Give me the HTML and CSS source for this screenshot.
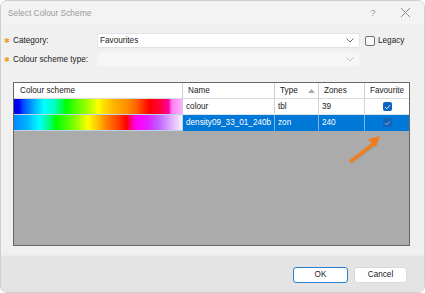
FILE: index.html
```html
<!DOCTYPE html>
<html>
<head>
<meta charset="utf-8">
<link rel="stylesheet" href="styles.css">
</head>
<body>
<div class="window">
  <div class="titlebar">
    <span class="title">Select Colour Scheme</span>
    <span class="tb-btn help">?</span>
    <span class="tb-btn close">
      <svg width="11" height="11" viewBox="0 0 11 11"><path d="M1 1 L10 10 M10 1 L1 10" stroke="#8a8a8a" stroke-width="1" fill="none"/></svg>
    </span>
  </div>
  <div class="form">
    <div class="row">
      <label class="lbl"><span class="req">✱</span>Category:</label>
      <div class="combo">
        <span>Favourites</span>
        <svg class="chev" width="8" height="5" viewBox="0 0 8 5"><path d="M0.5 0.5 L4 4 L7.5 0.5" stroke="#707070" fill="none"/></svg>
      </div>
      <span class="check-box"></span>
      <span class="legacy">Legacy</span>
    </div>
    <div class="row">
      <label class="lbl"><span class="req">✱</span>Colour scheme type:</label>
      <div class="combo disabled">
        <span></span>
        <svg class="chev" width="8" height="5" viewBox="0 0 8 5"><path d="M0.5 0.5 L4 4 L7.5 0.5" stroke="#c4c4c4" fill="none"/></svg>
      </div>
    </div>
  </div>
  <div class="table">
    <div class="thead">
      <div class="c c1">Colour scheme</div>
      <div class="c c2">Name</div>
      <div class="c c3">Type<svg class="sort" width="7" height="4" viewBox="0 0 7 4"><path d="M0 4 L3.5 0 L7 4 Z" fill="#a8a8a8"/></svg></div>
      <div class="c c4">Zones</div>
      <div class="c c5 center">Favourite</div>
    </div>
    <div class="tr">
      <div class="c c1 grad-cell"><div class="grad g1"></div></div>
      <div class="c c2">colour</div>
      <div class="c c3">tbl</div>
      <div class="c c4">39</div>
      <div class="c c5 center"><span class="fav"><svg width="7" height="6" viewBox="0 0 7 6"><path d="M1 3 L2.8 4.8 L6 1.2" stroke="#fff" stroke-width="0.9" fill="none"/></svg></span></div>
    </div>
    <div class="tr sel">
      <div class="c c1 grad-cell"><div class="grad g2"></div></div>
      <div class="c c2">density09_33_01_240b</div>
      <div class="c c3">zon</div>
      <div class="c c4">240</div>
      <div class="c c5 center"><span class="fav dim"><svg width="7" height="6" viewBox="0 0 7 6"><path d="M1 3 L2.8 4.8 L6 1.2" stroke="#8fb4dc" stroke-width="0.9" fill="none"/></svg></span></div>
    </div>
  </div>
  <div class="footer">
    <button class="btn default">OK</button>
    <button class="btn">Cancel</button>
  </div>
  <svg class="arrow" width="40" height="36" viewBox="0 0 40 36">
    <path d="M6 31 L28 14" stroke="#b85a10" stroke-width="3" stroke-linecap="round" fill="none" opacity="0.25" transform="translate(1,1)"/>
    <path d="M6 31 L28 14" stroke="#f07d1a" stroke-width="3" stroke-linecap="round" fill="none"/>
    <path d="M35 6 L23 9.5 L31 17 Z" fill="#f07d1a"/>
  </svg>
</div>
</body>
</html>
```

FILE: styles.css
```css
html, body {
  margin: 0;
  padding: 0;
  background: #ffffff;
}
body {
  font-family: "Liberation Sans", Arial, sans-serif;
  font-size: 8.2px;
  color: #1a1a1a;
}
.window {
  position: relative;
  width: 425px;
  height: 293px;
  box-sizing: border-box;
  border: 1px solid #cfcfcf;
  border-radius: 7px;
  background: #f0f0f0;
  overflow: hidden;
  display: flex;
  flex-direction: column;
}
.titlebar {
  height: 23px;
  display: flex;
  align-items: center;
  padding-left: 7px;
  background: #f3f3f3;
  flex: none;
}
.title {
  flex: 1;
  color: #9c9c9c;
  font-size: 8.4px;
}
.tb-btn {
  color: #9a9a9a;
  display: flex;
  align-items: center;
  justify-content: center;
}
.help {
  width: 14px;
  margin-right: 19px;
  font-size: 9.5px;
}
.close {
  width: 12px;
  margin-right: 13px;
}
.form {
  padding: 9px 0 0 3px;
  display: flex;
  flex-direction: column;
  gap: 4px;
  flex: none;
}
.row {
  display: flex;
  align-items: center;
  height: 15px;
}
.lbl {
  width: 93px;
  display: flex;
  align-items: center;
  white-space: nowrap;
}
.req {
  color: #f0a020;
  font-size: 7px;
  width: 9px;
}
.combo {
  width: 263px;
  height: 15px;
  box-sizing: border-box;
  border: 1px solid #e2e2e2;
  border-radius: 2px;
  background: #ffffff;
  display: flex;
  align-items: center;
  padding: 0 5px 0 2px;
}
.combo span {
  flex: 1;
}
.combo.disabled {
  background: #f6f6f6;
  border-color: #f3f3f3;
}
.chev {
  display: block;
}
.check-box {
  width: 10px;
  height: 10px;
  box-sizing: border-box;
  border: 1px solid #6f6f6f;
  border-radius: 2px;
  background: #fbfbfb;
  margin-left: 5px;
}
.legacy {
  margin-left: 3px;
}
.table {
  margin: 15px 0 0 12px;
  width: 397px;
  height: 164px;
  box-sizing: border-box;
  border: 1px solid #676767;
  background: #ababab;
  flex: none;
}
.thead, .tr {
  display: flex;
  height: 15px;
}
.thead {
  background: #ffffff;
  border-bottom: 1px solid #d9d9d9;
}
.tr {
  height: 16px;
}
.c {
  box-sizing: border-box;
  display: flex;
  align-items: center;
  padding-left: 3px;
  border-right: 1px solid #d4d4d4;
  white-space: nowrap;
  overflow: hidden;
}
.thead .c {
  border-right-color: #cfcfcf;
  padding-left: 5px;
}
.thead .c1 {
  padding-left: 6px;
}
.c1 { width: 169px; }
.c2 { width: 92px; }
.c3 { width: 44px; }
.c4 { width: 46px; }
.c5 { width: 44px; border-right: none; }
.center {
  justify-content: center;
  padding-left: 0;
}
.thead .center { padding-left: 0; }
.sort {
  margin-left: 10px;
}
.tr .c {
  background: #ffffff;
  border-bottom: 1px solid #dde6ef;
}
.tr .grad-cell {
  padding: 0;
  background: #bcd2e8;
  border-bottom: 1px solid #bcd2e8;
  border-right: 1px solid #bcd2e8;
}
.tr.sel .c {
  background: #0078d7;
  color: #ffffff;
  border-right-color: #7fb6e6;
  border-bottom-color: #0078d7;
}
.tr.sel .grad-cell {
  background: #bcd2e8;
  border-color: #bcd2e8;
}
.grad {
  width: 100%;
  height: 100%;
}
.g1 {
  background: linear-gradient(to right,
    #0000dc 0%, #0000f0 3%, #0040ff 5%, #0080ff 9%, #00c0ff 13%, #00ffff 18%,
    #00ffc0 24%, #00ff40 29%, #00ff00 31%, #60ff00 38%, #c0ff00 46%, #ffff00 50%,
    #ffd800 54%, #ffb000 60%, #ff9000 67%, #ff6000 73%, #ff2000 78%, #ff0000 81%,
    #ff0040 87%, #ff00a0 92%, #ff80f0 94%, #ffb0ff 100%);
}
.g2 {
  background: linear-gradient(to right,
    #0088ff 0%, #00b4ff 8%, #00ffff 15%, #00ff80 21%, #00ff00 25%, #80ff00 36%,
    #ffff00 44%, #ffc000 50%, #ff8000 55%, #ff4000 62%, #ff0000 67%, #ff00c0 71%,
    #ff00ff 74%, #e020ff 80%, #c060ff 86%, #dca8ff 93%, #f8f0ff 100%);
}
.fav {
  width: 9px;
  height: 9px;
  border-radius: 2px;
  background: #0a63c2;
  display: flex;
  align-items: center;
  justify-content: center;
}
.fav.dim {
  background: #1463b4;
}
.footer {
  margin-top: auto;
  height: 36px;
  background: #e4e4e4;
  border-top: 1px solid #ebebeb;
  display: flex;
  align-items: center;
  justify-content: flex-end;
  padding-right: 17px;
  gap: 6px;
  flex: none;
}
.btn {
  font-family: inherit;
  font-size: 8.2px;
  height: 16px;
  width: 53px;
  box-sizing: border-box;
  background: #ffffff;
  border: 1px solid #dadada;
  border-radius: 3px;
  padding: 0;
  color: #1a1a1a;
  margin-top: 1px;
}
.btn.default {
  width: 55px;
  border-color: #2a7fcf;
}
.arrow {
  position: absolute;
  left: 344px;
  top: 129px;
}
```
